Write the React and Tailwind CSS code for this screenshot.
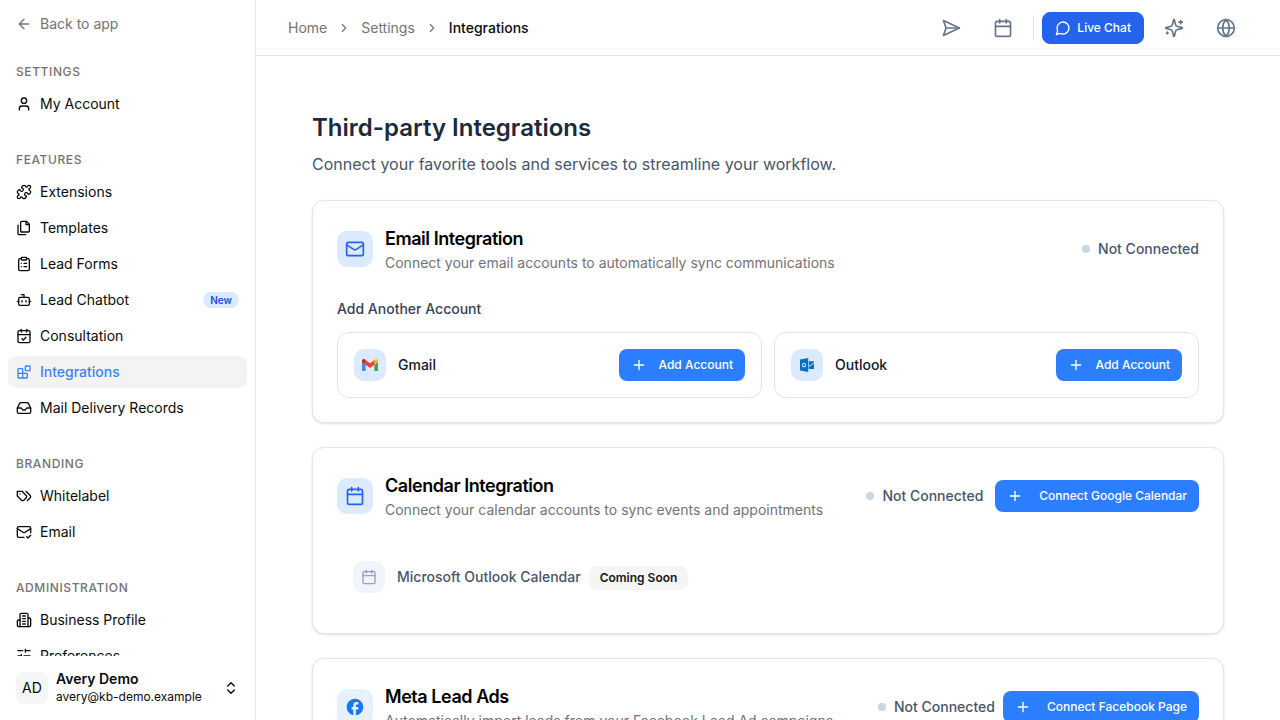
import {
  ArrowLeft, User, Puzzle, ClipboardList, Bot, CalendarCheck, Inbox, MailCheck,
  ChevronsUpDown, ChevronRight, Calendar, Globe, Mail, Plus,
} from "lucide-react";

function LineIcon({ className, children }) {
  return (
    <svg
      viewBox="0 0 24 24"
      fill="none"
      stroke="currentColor"
      strokeWidth="2"
      strokeLinecap="round"
      strokeLinejoin="round"
      className={className}
      aria-hidden="true"
    >
      {children}
    </svg>
  );
}

function FilesIcon({ className }) {
  return (
    <LineIcon className={className}>
      <path d="M15.5 2H8.6c-.4 0-.8.2-1.1.5-.3.3-.5.7-.5 1.100v12.800c0 .4.2.8.5 1.100.3.3.7.5 1.100.5h9.800c.4 0 .8-.2 1.100-.5.3-.3.5-.7.5-1.100V6.500L15.500 2z" />
      <path d="M3 7.600v12.800c0 .4.2.8.5 1.100.3.3.7.5 1.100.5h9.800" />
      <path d="M15 2v5h5" />
    </LineIcon>
  );
}

function BlocksIcon({ className }) {
  return (
    <LineIcon className={className}>
      <rect width="7" height="7" x="14" y="3" rx="1" />
      <path d="M10 21V8a1 1 0 0 0-1-1H4a1 1 0 0 0-1 1v12a1 1 0 0 0 1 1h12a1 1 0 0 0 1-1v-5a1 1 0 0 0-1-1H3" />
    </LineIcon>
  );
}

function TagsIcon({ className }) {
  return (
    <LineIcon className={className}>
      <path d="M9 5H2v7l6.290 6.290c.94.94 2.480.94 3.420 0l3.580-3.580c.94-.94.94-2.480 0-3.420L9 5Z" />
      <path d="M6 9.010V9" />
      <path d="m15 5 6.300 6.300a2.400 2.400 0 0 1 0 3.400L17 19" />
    </LineIcon>
  );
}

function BuildingIcon({ className }) {
  return (
    <LineIcon className={className}>
      <path d="M6 22V4a2 2 0 0 1 2-2h8a2 2 0 0 1 2 2v18Z" />
      <path d="M6 12H4a2 2 0 0 0-2 2v6a2 2 0 0 0 2 2h2" />
      <path d="M18 9h2a2 2 0 0 1 2 2v9a2 2 0 0 1-2 2h-2" />
      <path d="M10 6h4M10 10h4M10 14h4M10 18h4" />
    </LineIcon>
  );
}

function SlidersIcon({ className }) {
  return (
    <LineIcon className={className}>
      <path d="M21 4h-7M10 4H3M21 12h-9M8 12H3M21 20h-5M12 20H3M14 2v4M8 10v4M16 18v4" />
    </LineIcon>
  );
}

function SendIcon({ className }) {
  return (
    <LineIcon className={className}>
      <path d="m3 3 3 9-3 9 19-9Z" />
      <path d="M6 12h16" />
    </LineIcon>
  );
}

function ChatIcon({ className }) {
  return (
    <LineIcon className={className}>
      <path d="M7.900 20A9 9 0 1 0 4 16.100L2 22Z" />
    </LineIcon>
  );
}

function SparklesIcon({ className }) {
  return (
    <LineIcon className={className}>
      <path d="M9.937 15.500A2 2 0 0 0 8.500 14.063l-6.135-1.582a.5.5 0 0 1 0-.962L8.500 9.936A2 2 0 0 0 9.937 8.500l1.582-6.135a.5.5 0 0 1 .963 0L14.063 8.500A2 2 0 0 0 15.500 9.937l6.135 1.581a.5.5 0 0 1 0 .964L15.500 14.063a2 2 0 0 0-1.437 1.437l-1.582 6.135a.5.5 0 0 1-.963 0z" />
      <path d="M20 3v4M22 5h-4M4 17v2M5 18H3" />
    </LineIcon>
  );
}

const GROUPS = [
  { title: "Settings", items: [{ label: "My Account", icon: User }] },
  {
    title: "Features",
    items: [
      { label: "Extensions", icon: Puzzle },
      { label: "Templates", icon: FilesIcon },
      { label: "Lead Forms", icon: ClipboardList },
      { label: "Lead Chatbot", icon: Bot, badge: "New" },
      { label: "Consultation", icon: CalendarCheck },
      { label: "Integrations", icon: BlocksIcon, active: true },
      { label: "Mail Delivery Records", icon: Inbox },
    ],
  },
  { title: "Branding", items: [{ label: "Whitelabel", icon: TagsIcon }, { label: "Email", icon: MailCheck }] },
  {
    title: "Administration",
    items: [{ label: "Business Profile", icon: BuildingIcon }, { label: "Preferences", icon: SlidersIcon }],
  },
];

function NavItem({ label, icon: Icon, badge, active }) {
  return (
    <li>
      <a
        href="#"
        aria-current={active ? "page" : undefined}
        className={
          active
            ? "flex h-8 items-center gap-2 rounded-lg bg-[#f3f3f3] px-2 text-sm font-medium text-[#3b82f6]"
            : "flex h-8 items-center gap-2 rounded-lg px-2 text-sm text-neutral-950"
        }
      >
        <Icon className="size-4 shrink-0" />
        <span className="truncate">{label}</span>
        {badge && (
          <span className="ml-auto flex h-4 items-center rounded-full border border-transparent bg-blue-100 px-1.5 text-[10px] font-semibold text-[#1d4ed8]">
            {badge}
          </span>
        )}
      </a>
    </li>
  );
}

function Sidebar() {
  return (
    <aside className="flex h-full w-64 shrink-0 flex-col border-r border-neutral-200 bg-white">
      <div className="min-h-0 flex-1 overflow-y-auto px-2 pt-2 [scrollbar-width:none]">
        <a href="#" className="mb-4 flex h-8 items-center gap-2 px-2 text-sm text-neutral-500">
          <ArrowLeft className="size-4" />
          Back to app
        </a>
        <nav className="flex flex-col gap-6">
          {GROUPS.map((group) => (
            <section key={group.title}>
              <h2 className="flex h-8 items-center px-2 text-xs font-medium tracking-wider text-neutral-500 uppercase">
                {group.title}
              </h2>
              <ul className="flex flex-col gap-1">
                {group.items.map((item) => (
                  <NavItem key={item.label} {...item} />
                ))}
              </ul>
            </section>
          ))}
        </nav>
      </div>
      <div className="p-2">
        <button type="button" className="flex h-12 w-full items-center gap-2 px-2 text-left text-neutral-950">
          <span className="flex size-8 items-center justify-center rounded-lg bg-neutral-100 text-sm">AD</span>
          <span className="flex min-w-0 flex-1 flex-col pb-0.5">
            <span className="truncate text-sm font-semibold">Avery Demo</span>
            <span className="truncate text-xs">avery@kb-demo.example</span>
          </span>
          <ChevronsUpDown className="size-4" />
        </button>
      </div>
    </aside>
  );
}

function IconButton({ label, icon: Icon }) {
  return (
    <button type="button" aria-label={label} className="flex h-9 w-11 items-center justify-center text-[#64748b]">
      <Icon className="size-5" />
    </button>
  );
}

function Header() {
  return (
    <header className="flex h-14 shrink-0 items-center justify-between border-b border-neutral-200 px-8">
      <nav aria-label="Breadcrumb" className="flex items-center gap-2.5 text-sm text-neutral-500">
        <a href="#">Home</a>
        <ChevronRight className="size-3.5" />
        <a href="#">Settings</a>
        <ChevronRight className="size-3.5" />
        <span aria-current="page" className="font-medium text-neutral-950">Integrations</span>
      </nav>
      <div className="flex items-center gap-2">
        <IconButton label="Send" icon={SendIcon} />
        <IconButton label="Calendar" icon={Calendar} />
        <span className="h-6 w-px bg-neutral-200" />
        <button
          type="button"
          className="flex h-8 items-center gap-1.5 rounded-lg border border-[#2563eb] bg-[#2563eb] px-3 text-xs font-medium text-white"
        >
          <ChatIcon className="size-4" />
          Live Chat
        </button>
        <IconButton label="Assistant" icon={SparklesIcon} />
        <IconButton label="Language" icon={Globe} />
      </div>
    </header>
  );
}

function GmailLogo() {
  return (
    <svg viewBox="52 42 88 66" className="w-4" aria-hidden="true">
      <path fill="#4285f4" d="M58 108h14V74L52 59v43c0 3.32 2.69 6 6 6" />
      <path fill="#34a853" d="M120 108h14c3.32 0 6-2.69 6-6V59l-20 15" />
      <path fill="#fbbc04" d="M120 48v26l20-15v-8c0-7.42-8.47-11.65-14.4-7.2" />
      <path fill="#ea4335" d="M72 74V48l24 18 24-18v26L96 92" />
      <path fill="#c5221f" d="M52 51v8l20 15V48l-5.6-4.2c-5.94-4.45-14.4-.22-14.4 7.2" />
    </svg>
  );
}

function OutlookLogo() {
  return (
    <svg viewBox="0 0 32 32" className="size-4" aria-hidden="true">
      <path
        fill="#0072c6"
        fillRule="evenodd"
        d="M2 4.8 18.5 1.8v28.4L2 27.2zM10 11.4c-2.5 0-4 2-4 4.7s1.5 4.6 4 4.6 4-2 4-4.7-1.500-4.600-4-4.600zm0 2c1.300 0 2 1.200 2 2.700s-.7 2.600-2 2.600-2-1.100-2-2.600.7-2.700 2-2.700z"
      />
      <path fill="#0072c6" d="M19.700 8.500H29a1 1 0 0 1 1 1v1l-8.200 6.300-2.100-1.500z" />
      <path fill="#0072c6" d="M30 12.700V23a1 1 0 0 1-1 1h-9.300v-6.600l2.100 1.500z" />
    </svg>
  );
}

function FacebookLogo() {
  return (
    <svg viewBox="0 0 24 24" className="size-5" aria-hidden="true">
      <path
        fill="#1877f2"
        d="M22 12c0-5.520-4.480-10-10-10S2 6.480 2 12c0 4.840 3.440 8.870 8 9.800V15H8v-3h2V9.500C10 7.570 11.570 6 13.500 6H16v3h-2c-.55 0-1 .45-1 1v2h3v3h-3v6.950c5.050-.5 9-4.760 9-9.950"
      />
    </svg>
  );
}

function ActionButton({ children, wide }) {
  return (
    <button
      type="button"
      className={
        wide
          ? "flex h-8 shrink-0 items-center gap-4 rounded-lg bg-[#2b7fff] px-3 text-xs font-medium text-white"
          : "flex h-8 shrink-0 items-center gap-3 rounded-lg bg-[#2b7fff] px-3 text-xs font-medium text-white"
      }
    >
      <Plus className="size-4" />
      {children}
    </button>
  );
}

function Card({ icon, iconBg, title, description, action, tight, children }) {
  return (
    <section className="rounded-xl border border-neutral-200 bg-white p-6 shadow-sm">
      <div className="flex items-center justify-between">
        <div className="flex items-center gap-3">
          <span className={`flex size-9 shrink-0 items-center justify-center rounded-[10px] text-[#2563eb] ${iconBg}`}>
            {icon}
          </span>
          <div>
            <h2 className="text-lg font-semibold tracking-tight text-black">{title}</h2>
            <p className="text-sm text-neutral-500">{description}</p>
          </div>
        </div>
        <div className={tight ? "flex items-center gap-2" : "flex items-center gap-3"}>
          <span className="flex items-center gap-2 text-sm font-medium text-[#475569]">
            <span className="size-2 rounded-full bg-slate-300" />
            Not Connected
          </span>
          {action}
        </div>
      </div>
      {children}
    </section>
  );
}

function Account({ name, logo }) {
  return (
    <div className="flex items-center justify-between rounded-xl border border-neutral-200 p-4">
      <div className="flex items-center gap-3">
        <span className="flex size-8 items-center justify-center rounded-[10px] bg-blue-100">{logo}</span>
        <span className="text-sm font-medium text-slate-900">{name}</span>
      </div>
      <ActionButton>Add Account</ActionButton>
    </div>
  );
}

export default function App() {
  return (
    <div className="flex h-screen overflow-hidden bg-white font-['Inter',sans-serif]">
      <Sidebar />
      <div className="flex min-w-0 flex-1 flex-col">
        <Header />
        <main className="min-h-0 flex-1 overflow-y-auto p-14 [scrollbar-width:none]">
          <h1 className="text-2xl font-semibold text-[#1e293b]">Third-party Integrations</h1>
          <p className="mt-2 text-base text-[#475569]">
            Connect your favorite tools and services to streamline your workflow.
          </p>
          <div className="mt-6 flex flex-col gap-6">
            <Card
              icon={<Mail className="size-5" />}
              iconBg="bg-blue-100"
              title="Email Integration"
              description="Connect your email accounts to automatically sync communications"
            >
              <h3 className="mt-6 mb-3 text-sm leading-[23px] font-medium text-[#334155]">Add Another Account</h3>
              <div className="grid grid-cols-2 gap-3">
                <Account name="Gmail" logo={<GmailLogo />} />
                <Account name="Outlook" logo={<OutlookLogo />} />
              </div>
            </Card>
            <Card
              icon={<Calendar className="size-5" />}
              iconBg="bg-blue-100"
              title="Calendar Integration"
              description="Connect your calendar accounts to sync events and appointments"
              action={<ActionButton wide>Connect Google Calendar</ActionButton>}
            >
              <div className="mt-6 flex items-center gap-3 px-4 pt-[17px] pb-4">
                <span className="flex size-8 items-center justify-center rounded-[10px] bg-slate-100 text-slate-400">
                  <Calendar className="size-4" />
                </span>
                <div className="flex items-baseline gap-2 pt-0.5">
                  <span className="text-sm font-medium text-[#475569]">Microsoft Outlook Calendar</span>
                  <span className="rounded-lg border border-transparent bg-neutral-100 px-2.5 py-[3px] text-xs font-semibold text-neutral-900">
                    Coming Soon
                  </span>
                </div>
              </div>
            </Card>
            <Card
              icon={<FacebookLogo />}
              iconBg="bg-[#e7f1fe]"
              title="Meta Lead Ads"
              description="Automatically import leads from your Facebook Lead Ad campaigns"
              action={<ActionButton wide>Connect Facebook Page</ActionButton>}
              tight
            />
          </div>
        </main>
      </div>
    </div>
  );
}
